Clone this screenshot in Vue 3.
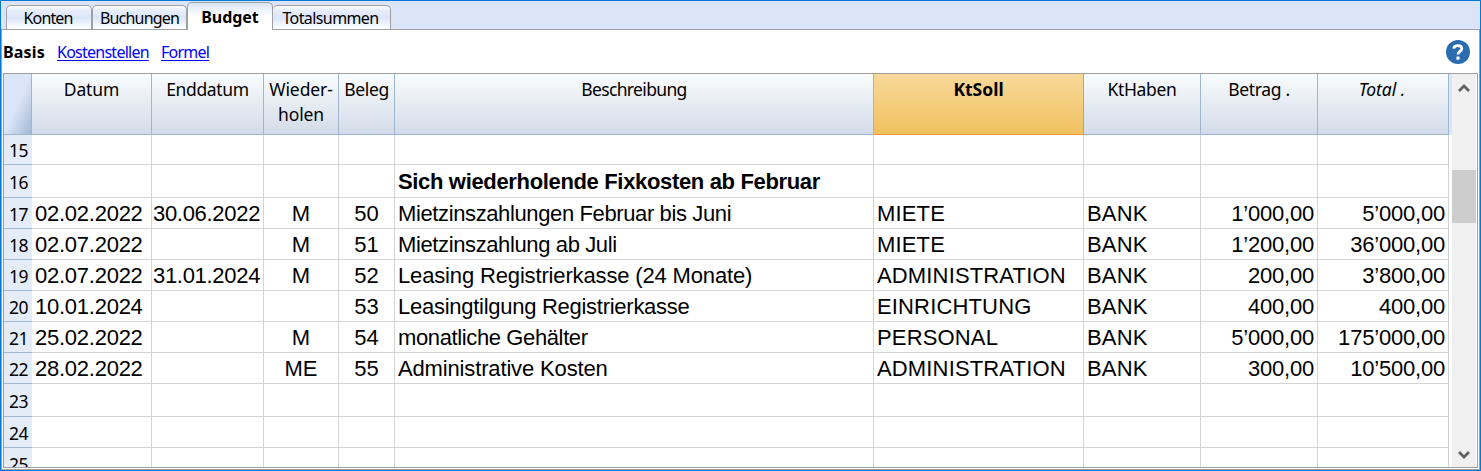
<script setup>
const tabs = [
  { label: 'Konten', cls: 'konten' },
  { label: 'Buchungen', cls: 'buchungen' },
  { label: 'Budget', cls: 'active' },
  { label: 'Totalsummen', cls: 'total' },
]

const columns = [
  { key: 'date', label: 'Datum' },
  { key: 'end', label: 'Enddatum' },
  { key: 'repeat', label: 'Wieder-\nholen' },
  { key: 'doc', label: 'Beleg' },
  { key: 'text', label: 'Beschreibung' },
  { key: 'debit', label: 'KtSoll' },
  { key: 'credit', label: 'KtHaben' },
  { key: 'amount', label: 'Betrag .' },
  { key: 'sum', label: 'Total .' },
]

const rows = [
  { n: 15, size: 'first' },
  { n: 16, size: 'tall', text: 'Sich wiederholende Fixkosten ab Februar', bold: true },
  { n: 17, date: '02.02.2022', end: '30.06.2022', repeat: 'M', doc: '50', text: 'Mietzinszahlungen Februar bis Juni', debit: 'MIETE', credit: 'BANK', amount: '1’000,00', sum: '5’000,00' },
  { n: 18, date: '02.07.2022', repeat: 'M', doc: '51', text: 'Mietzinszahlung ab Juli', debit: 'MIETE', credit: 'BANK', amount: '1’200,00', sum: '36’000,00' },
  { n: 19, fit: 'loose', date: '02.07.2022', end: '31.01.2024', repeat: 'M', doc: '52', text: 'Leasing Registrierkasse (24 Monate)', debit: 'ADMINISTRATION', credit: 'BANK', amount: '200,00', sum: '3’800,00' },
  { n: 20, fit: 'medium', date: '10.01.2024', doc: '53', text: 'Leasingtilgung Registrierkasse', debit: 'EINRICHTUNG', credit: 'BANK', amount: '400,00', sum: '400,00' },
  { n: 21, date: '25.02.2022', repeat: 'M', doc: '54', text: 'monatliche Gehälter', debit: 'PERSONAL', credit: 'BANK', amount: '5’000,00', sum: '175’000,00' },
  { n: 22, fit: 'loose', date: '28.02.2022', repeat: 'ME', doc: '55', text: 'Administrative Kosten', debit: 'ADMINISTRATION', credit: 'BANK', amount: '300,00', sum: '10’500,00' },
  { n: 23, size: 'tall' },
  { n: 24 },
  { n: 25 },
]
</script>

<template>
  <div class="window">
    <nav class="tabs">
      <div v-for="t in tabs" :key="t.label" class="tab" :class="t.cls"><span>{{ t.label }}</span></div>
    </nav>
    <main class="page">
      <div class="views">
        <b>Basis</b>
        <a class="kost">Kostenstellen</a>
        <a class="formel">Formel</a>
        <svg class="help" width="24" height="24" viewBox="0 0 24 24">
          <circle cx="12" cy="12" r="12" fill="#2b6cb0" />
          <path d="M7.7 8.6C8 6.6 9.6 5.6 11.8 5.6c2.5 0 4 1.1 4 3 0 2.8-3.9 2.9-3.9 6" fill="none" stroke="#fff" stroke-width="2.8" />
          <rect x="10.4" y="16.5" width="3.2" height="3.2" rx=".6" fill="#fff" />
        </svg>
      </div>
      <div class="box">
        <div class="table">
          <div class="row head">
            <div class="corner"></div>
            <div v-for="c in columns" :key="c.key" class="cell" :class="c.key"><span>{{ c.label }}</span></div>
          </div>
          <div v-for="r in rows" :key="r.n" class="row" :class="[r.size, r.fit, { bold: r.bold }]">
            <div class="num">{{ r.n }}</div>
            <div v-for="c in columns" :key="c.key" class="cell" :class="c.key">{{ r[c.key] }}</div>
          </div>
        </div>
        <div class="gap"></div>
        <div class="scroll">
          <svg width="12" height="10" viewBox="0 0 12 10"><path d="M1 8 6 3l5 5" /></svg>
          <div class="thumb"></div>
          <svg class="down" width="12" height="10" viewBox="0 0 12 10"><path d="M1 2l5 5 5-5" /></svg>
        </div>
      </div>
    </main>
  </div>
</template>

<style>
body { overflow: hidden; }
</style>

<style scoped>
* { box-sizing: border-box; }
.window {
  width: 1481px; height: 471px; border: 1px solid #0078d7; background: #dbe5f9;
  font-family: "Noto Sans", sans-serif; color: #000; display: flex; flex-direction: column;
}
.tabs { height: 28px; padding-left: 5px; display: flex; align-items: flex-end; flex: none; }
.tab {
  height: 24px; border: 1px solid #a0a0a0; border-bottom: 0; border-radius: 5px 5px 0 0;
  background: linear-gradient(#fff, #e9effb 15%, #dbe5f9 50%, #fff);
  font-size: 16px; line-height: 25px; text-align: center; white-space: nowrap; letter-spacing: -.6px;
}
.konten { width: 86px; letter-spacing: -.9px; padding-right: 2px; }
.buchungen { width: 95px; letter-spacing: -.8px; }
.active {
  width: 86px; height: 28px; margin-bottom: -1px; z-index: 1; letter-spacing: -.05px;
  background: linear-gradient(#dbe5f9, #fff 50%); font-weight: bold; line-height: 29px;
}
.total { width: 118px; border-left: 0; padding-right: 2px; }
.page {
  flex: 1; min-height: 0; background: #fff; border: 1px solid #a0a0a0;
  padding: 0 1px 1px; display: flex; flex-direction: column;
}
.views { height: 43px; flex: none; display: flex; align-items: center; font-size: 16px; line-height: 20px; }
.views b { width: 54px; letter-spacing: .15px; }
.views a { color: #00f; text-decoration: underline; letter-spacing: -.75px; text-underline-offset: 2px; }
.kost { width: 104px; }
.help { margin-left: auto; margin-right: 8px; }
.box { flex: 1; min-height: 0; border: 1px solid #a0a0a0; display: flex; }
.table { width: 1445px; overflow: hidden; }
.row {
  height: 31px; display: grid; grid-template-rows: 100%;
  grid-template-columns: 28px 120px 112px 75px 56px 479px 210px 117px 117px 131px;
}
.first { height: 30px; }
.tall { height: 33px; }
.num {
  background: #e4ecf7; border-bottom: 1px solid #9eb6ce; font-size: 17.5px; line-height: 33px;
  text-align: right; padding-right: 4px; letter-spacing: -.5px; overflow: hidden;
}
.first .num { line-height: 31px; }
.tall .num { line-height: 35px; }
.cell {
  border-right: 1px solid #d4d4d4; border-bottom: 1px solid #d4d4d4; white-space: pre;
  font: 22px/32px "Liberation Sans", Arial, sans-serif; overflow: hidden; padding: 0 3px;
}
.tall .cell { line-height: 34px; }
.date { letter-spacing: -.25px; }
.end { padding: 0 0 0 1px; letter-spacing: -.3px; }
.repeat, .doc { text-align: center; padding: 0; }
.text { letter-spacing: -.38px; }
.medium .text { letter-spacing: -.27px; }
.loose .text { letter-spacing: -.15px; }
.debit, .credit { letter-spacing: .15px; }
.amount, .sum { text-align: right; letter-spacing: -.2px; }
.bold .cell { font-weight: bold; letter-spacing: -.34px; }
.head { height: 61px; }
.corner {
  border-right: 1px solid #9eb6ce; border-bottom: 1px solid #9eb6ce;
  background: linear-gradient(115deg, #dbe5f9 50%, #a3b9d3);
}
.head .cell {
  border-color: #9eb6ce; background: linear-gradient(#f9fcfd, #d3dbe9); text-align: center;
  font: 17.5px/25px "Noto Sans", sans-serif; padding: 3px 0 0; letter-spacing: -.35px;
}
.head .date { letter-spacing: -.1px; }
.head .text { letter-spacing: -.65px; }
.head .repeat { letter-spacing: -.1px; }
.head .debit { background: linear-gradient(#f8d99b, #f1c15f); border-color: #f29536; font-weight: bold; letter-spacing: 0; }
.head .sum { font-style: italic; letter-spacing: 0; padding-right: 2px; }
.gap { width: 3px; height: 61px; background: #dbe5f9; }
.scroll { width: 24px; background: #f0f0f0; display: flex; flex-direction: column; align-items: center; padding-top: 9px; }
.scroll svg { flex: none; }
.scroll path { fill: none; stroke: #606060; stroke-width: 2.8; }
.thumb { width: 24px; height: 53px; margin-top: 77px; background: #cdcdcd; flex: none; }
.down { margin-top: auto; margin-bottom: 7px; }
</style>
